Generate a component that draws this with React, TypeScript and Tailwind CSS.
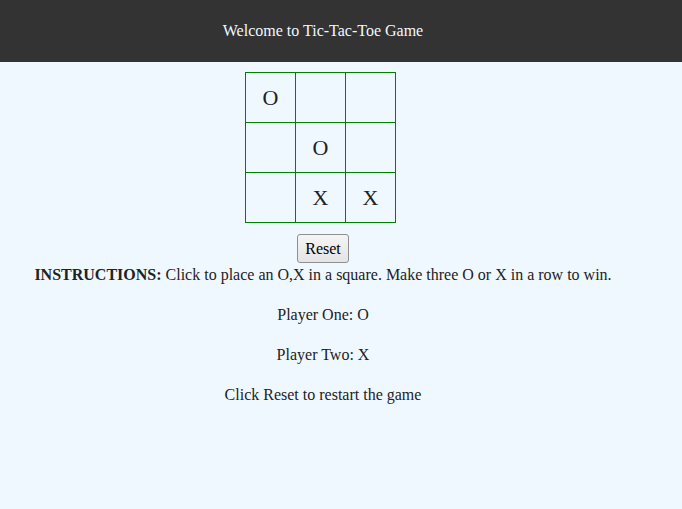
import React from "react";

const cells = ["O", "", "", "", "O", "", "", "X", "X"];

export default function App() {
  return (
    <div
      className="min-h-[509px] bg-[#f0f8ff] text-[#222] text-[16px] leading-[24px]"
      style={{ fontFamily: '"Liberation Serif", "Times New Roman", serif' }}
    >
      <header className="bg-[#333333] h-[62px] flex items-center">
        <div className="w-[646px] text-center text-[#f0f8ff]">Welcome to Tic-Tac-Toe Game</div>
      </header>
      <div className="w-[646px] flex flex-col items-center">
        <div className="pt-[10px] pr-[5px] flex justify-center w-full">
          <div className="grid grid-cols-[50px_50px_50px] border-l border-t border-[#008000]">
            {cells.map((c, i) => (
              <div
                key={i}
                className="w-[50px] h-[50px] border-r border-b border-[#008000] flex items-center justify-center text-[22px]"
              >
                {c}
              </div>
            ))}
          </div>
        </div>
        <button className="mt-[11px] px-[7px] pt-[2px] pb-[1px] border border-[#8f8f8f] rounded-[3px] bg-gradient-to-b from-[#f5f5f5] to-[#e4e4e4] text-[16px] leading-[24px] text-black">
          Reset
        </button>
        <p className="text-center">
          <b>INSTRUCTIONS:</b> Click to place an O,X in a square. Make three O or X in a row to win.
        </p>
        <p className="text-center mt-[16px]">Player One: O</p>
        <p className="text-center mt-[16px]">Player Two: X</p>
        <p className="text-center mt-[16px]">Click Reset to restart the game</p>
      </div>
    </div>
  );
}
